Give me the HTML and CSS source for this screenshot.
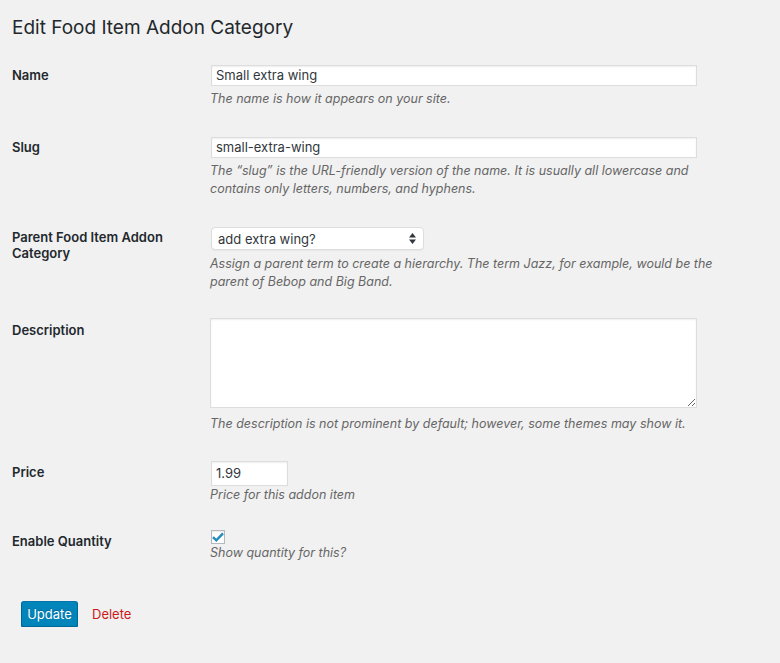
FILE: index.html
```html
<!DOCTYPE html>
<html lang="en">
<head>
<meta charset="utf-8">
<title>Edit Food Item Addon Category</title>
<link rel="stylesheet" href="styles.css">
</head>
<body>
<div class="wrap">
  <h1 class="title">Edit Food Item Addon Category</h1>
  <form class="form">
    <div class="row r1">
      <label class="label">Name</label>
      <div class="field">
        <div class="input wide">Small extra wing</div>
        <p class="desc">The name is how it appears on your site.</p>
      </div>
    </div>
    <div class="row r2">
      <label class="label">Slug</label>
      <div class="field">
        <div class="input wide">small-extra-wing</div>
        <p class="desc">The “slug” is the URL-friendly version of the name. It is usually all lowercase and contains only letters, numbers, and hyphens.</p>
      </div>
    </div>
    <div class="row r3">
      <label class="label">Parent Food Item Addon Category</label>
      <div class="field">
        <div class="select">
          <span>add extra wing?</span>
          <svg class="arrows" width="7" height="11" viewBox="0 0 7 11"><path d="M3.5 0 L7 4.5 H0 Z M3.5 11 L7 6.5 H0 Z" fill="#32373c"/></svg>
        </div>
        <p class="desc d3">Assign a parent term to create a hierarchy. The term Jazz, for example, would be the parent of Bebop and Big Band.</p>
      </div>
    </div>
    <div class="row r4">
      <label class="label">Description</label>
      <div class="field">
        <textarea class="textarea"></textarea>
        <p class="desc d4">The description is not prominent by default; however, some themes may show it.</p>
      </div>
    </div>
    <div class="row r5">
      <label class="label">Price</label>
      <div class="field">
        <div class="input price">1.99</div>
        <p class="desc d5">Price for this addon item</p>
      </div>
    </div>
    <div class="row r6">
      <label class="label">Enable Quantity</label>
      <div class="field">
        <div class="checkbox"><svg width="12" height="10" viewBox="0 0 12 10"><path d="M1 5.2 L4.3 8.3 L11 1.4" fill="none" stroke="#1e8cbe" stroke-width="2.4"/></svg></div>
        <p class="desc d6">Show quantity for this?</p>
      </div>
    </div>
    <div class="actions">
      <button type="button" class="btn">Update</button>
      <a class="delete" href="#">Delete</a>
    </div>
  </form>
</div>
</body>
</html>
```

FILE: styles.css
```css
html, body {
  margin: 0;
  padding: 0;
  background: #f1f1f1;
}
body {
  font-family: Inter, "Noto Sans", sans-serif;
  color: #23282d;
  font-size: 13px;
}
.wrap {
  padding: 0 12px;
}
.title {
  margin: 0;
  padding-top: 14px;
  font-size: 19px;
  line-height: 28px;
  font-weight: 400;
  color: #23282d;
}
.form {
  margin-top: 9px;
}
.row {
  display: grid;
  grid-template-columns: 198px 520px;
  align-items: start;
  padding: 14px 0 15px;
}
.label {
  font-weight: 600;
  font-size: 13px;
  line-height: 16px;
  margin-top: 2px;
  padding-right: 20px;
}
.field {
  display: flex;
  flex-direction: column;
  align-items: flex-start;
}
.input {
  box-sizing: border-box;
  height: 21px;
  margin-left: 1px;
  background: #fff;
  border: 1px solid #ddd;
  box-shadow: inset 0 1px 2px rgba(0,0,0,.07);
  padding: 0 4px;
  line-height: 19px;
  font-size: 13px;
  color: #32373c;
}
.wide { width: 486px; }
.price { width: 77px; height: 25px; line-height: 23px; }
.desc {
  margin: 4px 0 0;
  font-style: italic;
  font-size: 12.5px;
  line-height: 18px;
  color: #666;
}
.select {
  box-sizing: border-box;
  margin-left: 1px;
  width: 213px;
  height: 23px;
  background: #fff;
  border: 1px solid #ddd;
  border-radius: 4px;
  box-shadow: 0 1px 1px rgba(0,0,0,.04);
  display: flex;
  align-items: center;
  justify-content: space-between;
  padding: 0 7px 0 6px;
  color: #32373c;
}
.d3 { margin-top: 5px; }
.r4 { padding-top: 12px; }
.r4 .label { margin-top: 4px; }
.textarea {
  display: block;
  box-sizing: border-box;
  width: 487px;
  height: 90px;
  margin: 0;
  border: 1px solid #ddd;
  box-shadow: inset 0 1px 2px rgba(0,0,0,.07);
  background: #fff;
  resize: both;
  font-family: inherit;
}
.d4 { margin-top: 7px; }
.r5 { padding-top: 13px; }
.r5 .label { margin-top: 3px; }
.d5 { margin-top: 0; }
.r6 { padding-top: 11px; }
.r6 .label { margin-top: 3px; }
.checkbox {
  box-sizing: border-box;
  width: 14px;
  height: 14px;
  margin-left: 1px;
  background: #fff;
  border: 1px solid #b4b9be;
  box-shadow: inset 0 1px 2px rgba(0,0,0,.1);
  display: flex;
  align-items: center;
  justify-content: center;
}
.d6 { margin-top: 0; }
.actions {
  display: flex;
  align-items: center;
  margin-top: 24px;
  padding-left: 9px;
}
.btn {
  box-sizing: border-box;
  width: 57px;
  height: 26px;
  padding: 0;
  background: #0085ba;
  border: 1px solid #0073aa;
  border-color: #0073aa #006799 #006799;
  border-radius: 3px;
  box-shadow: 0 1px 0 #006799;
  color: #fff;
  font-family: inherit;
  font-size: 13px;
  text-shadow: 0 -1px 1px #006799;
}
.delete {
  margin-left: 14px;
  color: #cc1818;
  text-decoration: none;
  font-size: 13px;
}
```
